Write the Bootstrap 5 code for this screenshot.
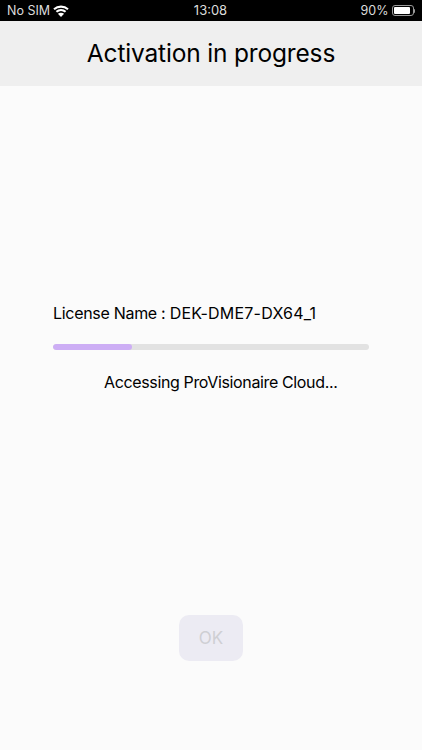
<!DOCTYPE html>
<html lang="en">
<head>
<meta charset="utf-8">
<title>Activation in progress</title>
<link rel="stylesheet" href="https://cdn.jsdelivr.net/npm/bootstrap@5.3.0/dist/css/bootstrap.min.css">
<style>
html,body{height:750px;overflow:hidden}
body{background:#fbfbfb;color:#000;font-family:Inter,"Liberation Sans",sans-serif}
.sbar{height:21px;background:#000;color:#dcdcdc;font-size:12.5px;padding:0 7px;line-height:21px}
.sbar-side{width:150px}
.clock{font-size:13px;margin-left:-1px}
.wifi{margin-left:-1px}
.pct{margin-right:3px}
.hdr{height:65px;background:#efefef;font-size:24.5px;letter-spacing:-.17px}
.pane{padding:0 53px;height:664px}
.lic{margin-top:216px;font-size:16px;line-height:22px;letter-spacing:-.3px;white-space:nowrap}
.lic-val{letter-spacing:.22px}
.pbar{height:6px;margin-top:20px;background:#e2e2e2;border-radius:3px}
.pbar .progress-bar{background:#cdaef5;border-radius:3px}
.acc{margin-top:21px;padding-left:51px;font-size:16px;line-height:22px;letter-spacing:-.36px;white-space:nowrap}
.okbtn{margin-top:222px;width:64px;height:46px;background:#ecebf3;color:#cfcfd3;font-size:17px;border:0;border-radius:10px;padding:2px 0 0}
.okbtn:disabled{background:#ecebf3;color:#cfcfd3;opacity:1}
.batt{width:22px;height:11px;border:1px solid #9a9a9a;border-radius:3px;padding:1px}
.batt i{display:block;height:100%;width:90%;background:#fff;border-radius:1px}
.nub{width:1.5px;height:4px;background:#9a9a9a;border-radius:0 1px 1px 0}
</style>
</head>
<body>
<div class="sbar d-flex justify-content-between align-items-center">
  <div class="sbar-side d-flex align-items-center gap-1">
    <span>No SIM</span>
    <svg class="wifi" width="16" height="12" viewBox="0 0 16 12" aria-hidden="true"><path fill="none" stroke="#fff" stroke-width="2.1" d="M1 4.3C5 .7 11 .7 15 4.3M3.4 6.8c2.7-2.3 6.5-2.3 9.2 0"/><path fill="#fff" d="M8 12 4.9 8.8c1.8-1.4 4.4-1.4 6.2 0z"/></svg>
  </div>
  <div class="clock">13:08</div>
  <div class="sbar-side d-flex align-items-center justify-content-end">
    <span class="pct">90%</span>
    <div class="batt"><i></i></div><div class="nub"></div>
  </div>
</div>
<header class="hdr d-flex align-items-center justify-content-center">Activation in progress</header>
<main class="pane d-flex flex-column">
  <div class="lic">License Name : <span class="lic-val">DEK-DME7-DX64_1</span></div>
  <div class="progress pbar"><div class="progress-bar" role="progressbar" style="width:25%" aria-valuenow="25" aria-valuemin="0" aria-valuemax="100"></div></div>
  <div class="acc">Accessing ProVisionaire Cloud...</div>
  <button class="btn okbtn align-self-center" disabled>OK</button>
</main>
<script src="https://cdn.jsdelivr.net/npm/bootstrap@5.3.0/dist/js/bootstrap.bundle.min.js"></script>
</body>
</html>
